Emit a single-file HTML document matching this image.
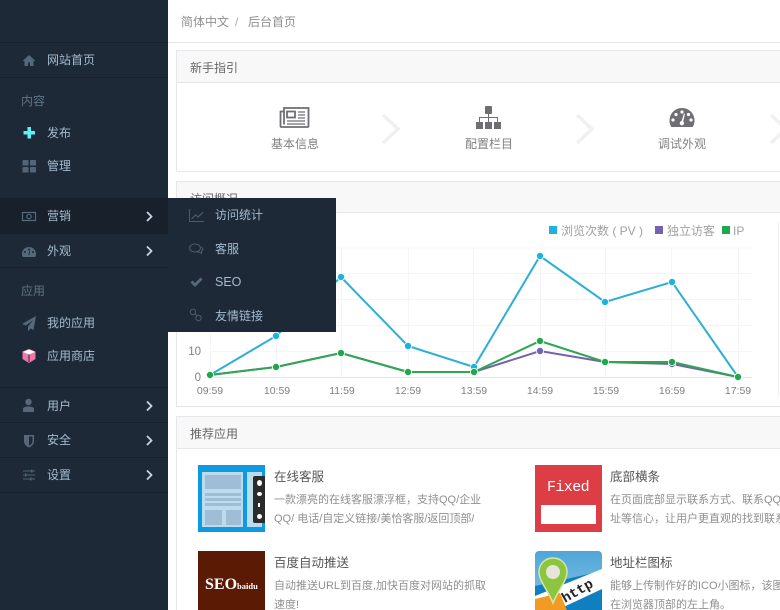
<!DOCTYPE html>
<html lang="zh">
<head>
<meta charset="utf-8">
<title>后台首页</title>
<style>
html,body{margin:0;padding:0;width:780px;height:610px;overflow:hidden;background:#fff}
body{font-family:"Liberation Sans","Noto Sans CJK SC",sans-serif;font-size:12px;color:#666}
#wrap{position:relative;width:780px;height:610px;overflow:hidden;filter:blur(.3px)}
.a{position:absolute;white-space:nowrap;line-height:16px}
.abs{position:absolute}
svg{position:absolute;overflow:hidden}
#side{position:absolute;left:0;top:0;width:168px;height:610px;background:#1d2936}
.ln{position:absolute;left:0;width:168px;height:1px;background:#18222d}
.st{color:#a4bbcf}
.gt{color:#5f7486}
.pn{position:absolute;left:176px;width:604px;border:1px solid #e7e7eb;border-right:0;box-sizing:border-box;background:#fff}
.ph{position:absolute;left:176px;width:604px;background:#f8f8f9;border:1px solid #e7e7eb;border-right:0;box-sizing:border-box}
.gray{color:#808080}
.desc{color:#8f8f8f;font-size:11px;overflow:hidden}
.title{color:#555;font-size:12.5px}
.ax{fill:#808080;font-size:10.5px;font-family:"Liberation Sans",sans-serif}
</style>
</head>
<body>
<div id="wrap">

<!-- top bar -->
<div class="abs" style="left:168px;top:42px;width:612px;height:1px;background:#e7e7eb"></div>
<div class="a" style="left:181px;top:14px;color:#8f8f8f">简体中文</div>
<div class="a" style="left:235px;top:14px;color:#aaa">/</div>
<div class="a" style="left:248px;top:14px;color:#8f8f8f">后台首页</div>

<!-- panel 1 -->
<div class="pn" style="top:50px;height:122px"></div>
<div class="ph" style="top:50px;height:33px"></div>
<div class="a" style="left:190px;top:60px;color:#666">新手指引</div>

<svg style="left:0;top:0" width="780" height="610" fill="none">
  <!-- newspaper -->
  <g stroke="#6f6f73" stroke-width="1.800">
    <path d="M284 108h24.500v18a1 1 0 0 1-1 1h-26a1 1 0 0 1-1-1v-14.500h3.500z"/>
    <path d="M284 112v12.500"/>
    <rect x="287" y="111.500" width="8" height="6"/>
    <path d="M298 112h7M298 115h7M298 118h7M287 121h18M287 124h18" stroke-width="1.300"/>
  </g>
  <!-- sitemap -->
  <g fill="#6f6f73">
    <rect x="485" y="106" width="7" height="8" rx="1"/>
    <rect x="476" y="122" width="7" height="7"/>
    <rect x="485" y="122" width="7" height="7"/>
    <rect x="494" y="122" width="7" height="7"/>
    <path d="M488 114h1v3h9v5h-1v-4h-8v4h-1v-4h-8v4h-1v-5h9z"/>
  </g>
  <!-- dashboard -->
  <path d="M682 108c-7 0-12.500 5.500-12.500 12.500 0 2.500.7 4.700 1.800 6.500h21.400c1.100-1.800 1.800-4 1.800-6.500 0-7-5.500-12.500-12.500-12.500z" fill="#6f6f73"/>
  <g fill="#fff">
    <circle cx="682" cy="112" r="1.600"/><circle cx="676" cy="114.500" r="1.600"/><circle cx="673" cy="120" r="1.600"/>
    <circle cx="688.500" cy="114.500" r="1.600"/><circle cx="691" cy="120" r="1.600"/>
    <path d="M684 113.500l1 .4-1.800 7.500a2.200 2.200 0 1 1-1.600-.4z"/>
  </g>
  <!-- step chevrons -->
  <g stroke="#f0f0f3" stroke-width="3.500">
    <path d="M383 115l15 14-15 14"/>
    <path d="M577 115l15 14-15 14"/>
    <path d="M771 115l15 14-15 14"/>
  </g>
</svg>
<div class="a gray" style="left:271px;top:136px">基本信息</div>
<div class="a gray" style="left:465px;top:136px">配置栏目</div>
<div class="a gray" style="left:658px;top:136px">调试外观</div>

<!-- panel 2 -->
<div class="pn" style="top:181px;height:226px"></div>
<div class="ph" style="top:181px;height:32px"></div>
<div class="a" style="left:190px;top:191px;color:#666">访问概况</div>
<div class="abs" style="left:778px;top:222px;width:1px;height:175px;background:#f1f1f3"></div>

<svg style="left:0;top:0" width="780" height="610" fill="none">
  <g stroke="#f5f5f9" stroke-width="1">
    <path d="M210.500 248H752M210.500 273.500H752M210.500 299.500H752M210.500 325.500H752M210.500 351.500H752"/>
    <path d="M210.500 248V377M276.500 248V377M341.500 248V377M408.500 248V377M473.500 248V377M540.500 248V377M605.500 248V377M671.500 248V377M738.500 248V377"/>
  </g>
  <path d="M205 377.500H752" stroke="#e6e6ec"/>
  <polyline points="210,375 276,336 341,277 408,346 474,367 540,256 605,302 672,282 738,377" stroke="#2fb0d2" stroke-width="2"/>
  <polyline points="210,375 276,367 341,353 408,372 474,372 540,351 605,362 672,364 738,377" stroke="#7461b1" stroke-width="2"/>
  <polyline points="210,375 276,367 341,353 408,372 474,372 540,341 605,362 672,362 738,377" stroke="#2fa651" stroke-width="2"/>
  <g fill="#1fb2e0" stroke="#fff" stroke-width=".8">
    <circle cx="276" cy="336" r="3.600"/><circle cx="341" cy="277" r="3.600"/><circle cx="408" cy="346" r="3.600"/><circle cx="474" cy="367" r="3.600"/><circle cx="540" cy="256" r="3.600"/><circle cx="605" cy="302" r="3.600"/><circle cx="672" cy="282" r="3.600"/>
  </g>
  <g fill="#7461b1" stroke="#fff" stroke-width=".8">
    <circle cx="540" cy="351" r="3.600"/><circle cx="672" cy="364" r="3.600"/>
  </g>
  <g fill="#1fa84b" stroke="#fff" stroke-width=".8">
    <circle cx="210" cy="375" r="3.600"/><circle cx="276" cy="367" r="3.600"/><circle cx="341" cy="353" r="3.600"/><circle cx="408" cy="372" r="3.600"/><circle cx="474" cy="372" r="3.600"/><circle cx="540" cy="341" r="3.600"/><circle cx="605" cy="362" r="3.600"/><circle cx="672" cy="362" r="3.600"/><circle cx="738" cy="377" r="3.600"/>
  </g>
  <text class="ax" x="201" y="355" text-anchor="end" style="font-size:11.500px">10</text>
  <text class="ax" x="201" y="381" text-anchor="end" style="font-size:11.500px">0</text>
  <g class="ax" text-anchor="middle">
    <text x="210" y="394">09:59</text><text x="277" y="394">10:59</text><text x="342" y="394">11:59</text><text x="408" y="394">12:59</text><text x="474" y="394">13:59</text><text x="540" y="394">14:59</text><text x="606" y="394">15:59</text><text x="672" y="394">16:59</text><text x="738" y="394">17:59</text>
  </g>
  <rect x="549" y="226" width="8" height="8" fill="#1fb2e0"/>
  <rect x="655" y="226" width="8" height="8" fill="#7461b1"/>
  <rect x="722" y="226" width="8" height="8" fill="#1fa84b"/>
</svg>
<div class="a" style="left:561px;top:223px;color:#a0a0a0">浏览次数 ( PV )</div>
<div class="a" style="left:667px;top:223px;color:#a0a0a0">独立访客</div>
<div class="a" style="left:733px;top:223px;color:#a0a0a0">IP</div>

<!-- panel 3 -->
<div class="pn" style="top:416px;height:194px;border-bottom:0"></div>
<div class="ph" style="top:416px;height:33px"></div>
<div class="a" style="left:190px;top:426px;color:#666">推荐应用</div>

<!-- app 1 -->
<div class="abs" style="left:198px;top:465px;width:67px;height:67px;background:#0e9ae0;overflow:hidden">
  <div class="abs" style="left:4px;top:7px;width:41px;height:55px;background:#bcdcee"></div>
  <div class="abs" style="left:7px;top:10px;width:36px;height:14px;background:#9fbdd4"></div>
  <div class="abs" style="left:7px;top:28px;width:36px;height:3px;background:#9fbdd4"></div>
  <div class="abs" style="left:7px;top:33px;width:36px;height:3px;background:#9fbdd4"></div>
  <div class="abs" style="left:7px;top:38px;width:36px;height:3px;background:#9fbdd4"></div>
  <div class="abs" style="left:7px;top:45px;width:17px;height:15px;background:#9fbdd4"></div>
  <div class="abs" style="left:28px;top:45px;width:15px;height:15px;background:#9fbdd4"></div>
  <div class="abs" style="left:49px;top:7px;width:15px;height:55px;background:#bcdcee"></div>
  <div class="abs" style="left:55px;top:11px;width:12px;height:47px;background:#2b2b2b;border-radius:2px 0 0 2px"></div>
  <div class="abs" style="left:59px;top:15px;width:5px;height:6px;background:#fff;border-radius:50%"></div>
  <div class="abs" style="left:59px;top:27px;width:5px;height:4px;background:#fff;border-radius:50%"></div>
  <div class="abs" style="left:60px;top:38px;width:2px;height:4px;background:#fff"></div>
  <div class="abs" style="left:59px;top:49px;width:5px;height:5px;background:#fff;border-radius:50%"></div>
</div>
<div class="a title" style="left:274px;top:469px">在线客服</div>
<div class="a desc" style="left:274px;top:492px">一款漂亮的在线客服漂浮框，支持QQ/企业</div>
<div class="a desc" style="left:274px;top:511px">QQ/ 电话/自定义链接/美恰客服/返回顶部/</div>

<!-- app 2 -->
<div class="abs" style="left:198px;top:551px;width:67px;height:59px;background:#5b1a04"></div>
<div class="a" style="left:205px;top:576px;color:#fff;font:bold 16px/18px 'Liberation Serif',serif">SEO<span style="font-size:8.500px">baidu</span></div>
<div class="a title" style="left:274px;top:555px">百度自动推送</div>
<div class="a desc" style="left:274px;top:578px">自动推送URL到百度,加快百度对网站的抓取</div>
<div class="a desc" style="left:274px;top:597px;height:13px">速度!</div>

<!-- app 3 -->
<div class="abs" style="left:535px;top:465px;width:67px;height:67px;background:#dd3d45"></div>
<div class="a" style="left:547px;top:478px;color:#fff;font:15px/20px 'Liberation Mono',monospace;letter-spacing:-.6px">Fixed</div>
<div class="abs" style="left:541px;top:505px;width:55px;height:19px;background:#fff"></div>
<div class="a title" style="left:610px;top:469px">底部横条</div>
<div class="a desc" style="left:610px;top:492px;width:170px">在页面底部显示联系方式、联系QQ、微信地</div>
<div class="a desc" style="left:610px;top:511px;width:170px">址等信心，让用户更直观的找到联系方式</div>

<!-- app 4 -->
<div class="abs" style="left:535px;top:551px;width:67px;height:59px;border-radius:4px 4px 0 0;overflow:hidden;background:linear-gradient(#4ea6d8,#8cc6e6)">
  <svg width="67" height="59" style="left:0;top:0">
    <path d="M0 35L67 20V67H0z" fill="#0f7fc0"/>
    <path d="M0 45L67 18V38L20 60H0z" fill="#fff"/>
    <path d="M0 48L25 42 35 67H0z" fill="#f39a22"/>
    <path d="M18 7c-8 0-14 6-14 14 0 9 10 20 14 31 4-11 14-22 14-31 0-8-6-14-14-14z" fill="#8cc540" stroke="#d4e6a8" stroke-width="1.500"/>
    <circle cx="18" cy="21" r="7" fill="#e6e6d8"/>
    <text transform="translate(30,52) rotate(-30)" fill="#222" style="font:bold 14px 'Liberation Mono',monospace">http</text>
  </svg>
</div>
<div class="a title" style="left:610px;top:555px">地址栏图标</div>
<div class="a desc" style="left:610px;top:578px;width:170px">能够上传制作好的ICO小图标，该图标显示</div>
<div class="a desc" style="left:610px;top:597px;width:170px;height:13px">在浏览器顶部的左上角。</div>

<!-- sidebar -->
<div id="side"></div>
<div class="ln" style="top:42px"></div>
<div class="ln" style="top:77px"></div>
<div class="abs" style="left:0;top:198px;width:168px;height:36px;background:#18212b"></div>
<div class="ln" style="top:267px"></div>
<div class="ln" style="top:387px"></div>
<div class="ln" style="top:422px"></div>
<div class="ln" style="top:457px"></div>
<div class="ln" style="top:492px"></div>

<!-- flyout -->
<div class="abs" style="left:168px;top:198px;width:168px;height:134px;background:#1d2937"></div>

<div class="a st" style="left:47px;top:52px">网站首页</div>
<div class="a gt" style="left:21px;top:93px">内容</div>
<div class="a st" style="left:47px;top:125px">发布</div>
<div class="a st" style="left:47px;top:158px">管理</div>
<div class="a st" style="left:47px;top:208px">营销</div>
<div class="a st" style="left:47px;top:243px">外观</div>
<div class="a gt" style="left:21px;top:283px">应用</div>
<div class="a st" style="left:47px;top:315px">我的应用</div>
<div class="a st" style="left:47px;top:348px">应用商店</div>
<div class="a st" style="left:47px;top:398px">用户</div>
<div class="a st" style="left:47px;top:432px">安全</div>
<div class="a st" style="left:47px;top:467px">设置</div>

<div class="a st" style="left:215px;top:207px">访问统计</div>
<div class="a st" style="left:215px;top:241px">客服</div>
<div class="a st" style="left:215px;top:274px;font-size:12.500px">SEO</div>
<div class="a st" style="left:215px;top:308px">友情链接</div>

<svg style="left:0;top:0" width="340" height="500" fill="none">
  <!-- home -->
  <path d="M29 55l-6.500 6h2v5h3.500v-3.500h2V66h3.500v-5h2z" fill="#52697a"/>
  <!-- plus -->
  <path d="M27.500 127h3.500v4h4v3.500h-4v4h-3.500v-4h-4V131h4z" fill="#5ef0f5"/>
  <!-- grid -->
  <g fill="#52667a">
    <rect x="22.500" y="160" width="6" height="5.500" rx=".8"/><rect x="30" y="160" width="6" height="5.500" rx=".8"/>
    <rect x="22.500" y="167" width="6" height="5.500" rx=".8"/><rect x="30" y="167" width="6" height="5.500" rx=".8"/>
  </g>
  <!-- money -->
  <g stroke="#56697a" stroke-width="1.200"><rect x="22.500" y="212.500" width="13" height="8"/><circle cx="29" cy="216.500" r="2.200"/></g>
  <!-- dashboard -->
  <path d="M29 247c-4 0-7 3-7 7 0 1.200.3 2.200.8 3h12.400c.5-.8.800-1.800.800-3 0-4-3-7-7-7z" fill="#56697a"/>
  <g fill="#1d2936"><circle cx="29" cy="249.500" r="1"/><circle cx="25" cy="252" r="1"/><circle cx="33" cy="252" r="1"/><path d="M29.500 250.500l.6.2-.8 4.300h-1z"/></g>
  <!-- paper plane -->
  <path d="M36 316l-14 8 4 1.500 7-5.500-5 6.500v5l2.500-3 3 1.500z" fill="#56697a"/>
  <!-- cube -->
  <path d="M29 349l6.500 2.500v7.500L29 363l-6.500-4v-7.500z" fill="#ef79ab"/>
  <path d="M23 352l6 2.500 6-2.500-6-2.500z" fill="#fff"/>
  <path d="M29 354.500V362" stroke="#1d2936"/>
  <!-- user -->
  <circle cx="28.500" cy="402" r="3.200" fill="#56697a"/>
  <path d="M23 412v-3c0-1.500 2-2.500 5.500-2.500s5.500 1 5.500 2.500v3z" fill="#56697a"/>
  <!-- shield -->
  <path d="M24 435h10v6c0 3.500-2.500 5.500-5 6.500-2.500-1-5-3-5-6.500z" fill="#56697a"/>
  <path d="M29 436.500h3.500v4.500c0 2.500-1.800 3.800-3.500 4.800z" fill="#1d2936"/>
  <!-- sliders -->
  <g stroke="#4f6272" stroke-width="1"><path d="M23 471h12M23 475h12M23 479h12"/></g>
  <g fill="#4f6272"><rect x="31" y="469.500" width="1.500" height="3"/><rect x="25" y="473.500" width="1.500" height="3"/><rect x="30" y="477.500" width="1.500" height="3"/></g>
  <!-- chevrons -->
  <g stroke="#c4d6e4" stroke-width="1.800">
    <path d="M147 212l4.500 4.500-4.500 4.500"/>
    <path d="M147 246.500l4.500 4.500-4.500 4.500"/>
    <path d="M147 401.500l4.500 4.500-4.500 4.500"/>
    <path d="M147 436l4.500 4.500-4.500 4.500"/>
    <path d="M147 470.500l4.500 4.500-4.500 4.500"/>
  </g>
  <!-- flyout icons -->
  <g stroke="#4a5d6d" stroke-width="1">
    <path d="M189.500 209v12.500H204"/>
    <path d="M191.500 219l4-4 2.500 2 5-4.500" stroke-width="1.200"/>
    <ellipse cx="195" cy="248" rx="5.500" ry="4"/>
    <path d="M201.500 247c1.500 1 2 3 0 4.500v2l-2.500-1.500h-2"/>
    <circle cx="193" cy="312" r="2.700"/><circle cx="198.500" cy="318" r="2.700"/><path d="M195 314l2 2"/>
  </g>
  <path d="M190.500 282.500l2-2 2.500 2.500 5.500-5.500 2 2-7.500 7.500z" fill="#56697a"/>
</svg>

</div>
</body>
</html>
